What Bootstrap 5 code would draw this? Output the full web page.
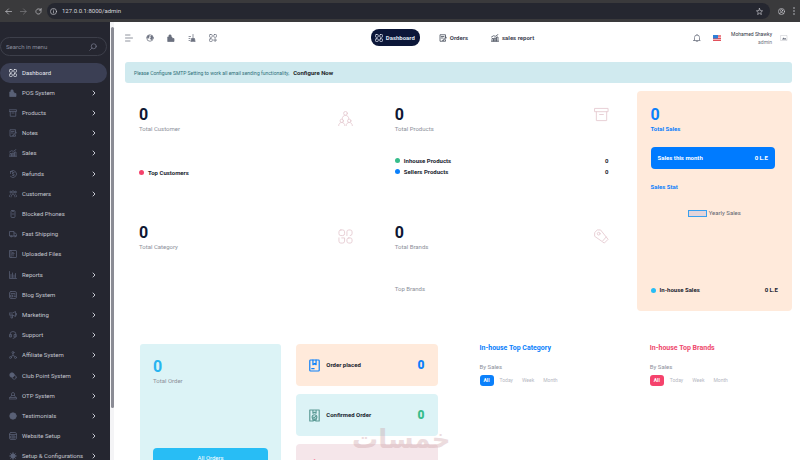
<!DOCTYPE html>
<html lang="en">
<head>
<meta charset="utf-8">
<meta name="viewport" content="width=device-width, initial-scale=1">
<title>Admin dashboard</title>
<link rel="stylesheet" href="https://cdn.jsdelivr.net/npm/bootstrap@5.3.0/dist/css/bootstrap.min.css">
<style>
body{font:6px/10px Roboto,"Liberation Sans",sans-serif;color:#20242f;background:#fff;height:100vh;overflow:hidden}
svg{fill:none;stroke:currentColor;stroke-width:1.5;stroke-linecap:round;stroke-linejoin:round;flex:none}
a{color:inherit;text-decoration:none}
button,input{font:inherit}
.ic8{width:8px;height:8px}
.ic14{width:15px;height:15px;stroke-width:1;color:#e6cdd3}
.browser-bar{height:22px;background:#3a3a3c;color:#c9cad0;gap:8px;padding:0 5px}
.browser-bar button,.plain-btn{border:0;padding:0;background:none;color:inherit;display:flex}
.browser-bar .ic8{width:7px;height:7px}
.address{background:#252730;border-radius:8px;height:16px;padding:0 7px 0 3px;margin-left:-3px;gap:5px}
.address input{background:none;border:0;outline:0;color:#d5d6dc;padding:0;min-width:0}
.side{width:110px;background:#252630;color:#c3c5ce;padding-top:15px}
.side-search{height:19px;border:1px solid #3d3f4a;border-radius:10px;padding:0 9px 0 5px;margin:0 3px 7px 0;color:#74778a}
.side-search input{background:none;border:0;outline:0;min-width:0;color:inherit;padding:0}
.side-search input::placeholder{color:#8b8e9d;opacity:1}
.side li:nth-child(5n){margin-bottom:1px}
.side li a{height:20px;padding:0 11px 0 9px;margin-right:3px;gap:5px;display:flex;align-items:center;border-radius:10px;white-space:nowrap}
.side li a .ic8{color:#596076}
.side li a.current,.side li a.current .ic8{color:#e6e8ef}
.side li a.current{background:#3b3f54}
.side li a .chev{width:4px;height:6px;margin-left:auto;stroke-width:1}
.scroll-track{width:4px;background:#f4f4f6}
.scroll-thumb{height:87%;margin:5px 0 0 1px;background:#8b8c95;border-radius:2px}
.page{padding:0 8px 0 11px}
.topbar{display:grid;grid-template-columns:1fr auto 1fr;height:31px;align-items:center;color:#6b707f}
.top-icons{gap:13px}
.top-links{gap:19px;font-weight:700;color:#3f4554;margin-right:12px}
.top-links a{display:flex;align-items:center;gap:3px}
.top-links .pill{background:#0c1739;color:#dfe3f0;border-radius:8px;height:17px;padding:0 5px 0 4px}
.user-name{font-size:5px;line-height:8px;color:#2f3442;white-space:nowrap}
.user-name small{font-size:5px;line-height:8px;color:#737783}
.flag{width:8px;height:6px;margin:0 10px 0 12px}
.avatar{width:8px;height:6px;margin:0 4px 0 8px}
.notice{background:#d0eaef;color:#2f7079;height:21px;border-radius:3px;padding:0 9px;margin:9px 0 8px;gap:4px;font-size:5px}
.notice a{font-size:6px}
.stats{display:grid;grid-template-columns:14fr 14fr 9fr;column-gap:14px;row-gap:16px}
.stat{height:102px;padding:16px 14px 0}
.tall{grid-column:3;grid-row:1/3;background:#ffeadb;border-radius:4px;padding:16px 14px}
.num{font-size:16px;line-height:16px;font-weight:700;color:#0e1733}
.muted,.total-label{line-height:12px}
.muted{color:#8c909a}
.dot{width:5px;height:5px;border-radius:50%}
.bg-rose{background:#f5426c}
.bg-mint{background:#36bd8b}
.bg-azure{background:#0b80fb}
.bg-sky{background:#28bdf5}
.rows{font-weight:700;line-height:11px;margin-top:20px}
.rows.one{margin-top:32px}
.stats .brand-title{margin-top:30px}
.blue,.num.blue{color:#0b80fb}
.month{background:#007bff;color:#fff;height:22px;border-radius:4px;padding:0 7px;margin:12px 3px 13px 0}
.legend-row{gap:2px;margin-top:16px;color:#62656f}
.swatch{width:19px;height:7px;border:1px solid #39a0ee;background:#e5d4d9}
.lower{display:grid;grid-template-columns:326fr 156fr 156fr;column-gap:14px;margin-top:18px}
.orders{display:grid;grid-template-columns:1fr 1fr;gap:15px;padding:15px 14px 0 15px}
.total-order{background:#dcf3f6;border-radius:3px;padding:15px 13px}
.all-btn{background:#28bdf5;color:#fff;border:0;border-radius:4px;height:20px;margin-top:61px;padding:0}
.order-state{height:42px;border-radius:4px;padding:0 13px;font-weight:700;gap:6px}
.order-state svg{width:11px;height:13px}
.order-state b{font-size:12px}
.top-list{padding:13px 14px}
.top-list h2{font-size:7px;line-height:12px;font-weight:700;margin:0 0 7px}
.periods{gap:1px;color:#b5b7bf;font-size:5px;margin-top:2px}
.periods button{border:0;background:none;color:inherit;height:11px;border-radius:3px;padding:0 4px;line-height:11px}
.periods button.on{color:#fff;font-weight:700;margin-right:1px}
.periods button.bg-azure{background:#0b80fb}
.periods button.bg-rose{background:#f5426c}
.watermark{position:absolute;left:352px;top:423px;font:700 26px/32px "DejaVu Sans",sans-serif;color:#c99ba0;opacity:.34;pointer-events:none}
</style>
</head>
<body class="d-flex flex-column position-relative">
<svg class="d-none">
<symbol id="grid" viewBox="0 0 16 16"><rect x="1" y="1" width="5.5" height="5.5" rx="1.5"/><rect x="9.5" y="1" width="5.5" height="5.5" rx="1.5"/><rect x="1" y="9.5" width="5.5" height="5.5" rx="1.5"/><rect x="9.5" y="9.5" width="5.5" height="5.5" rx="1.5"/></symbol>
<symbol id="gridplus" viewBox="0 0 16 16"><rect x="1" y="1" width="5.5" height="5.5" rx="1.5"/><rect x="9.5" y="1" width="5.5" height="5.5" rx="1.5"/><rect x="1" y="9.5" width="5.5" height="5.5" rx="1.5"/><path d="M12.2 9v6.500M9 12.200h6.500"/></symbol>
<symbol id="category" viewBox="0 0 16 16"><rect x="1" y="1" width="6" height="6" rx="2"/><path d="M9.500 7V3a2 2 0 0 1 2-2h1.500a2 2 0 0 1 2 2v2a2 2 0 0 1-2 2M1 9.500V13a2 2 0 0 0 2 2h2a2 2 0 0 0 2-2V9.500H4"/><rect x="9.500" y="9.500" width="5.500" height="5.500" rx="2"/></symbol>
<symbol id="pos" viewBox="0 0 16 16"><path fill="currentColor" d="M2 6h8v3h4v6H2zM4 6V2h4v4"/></symbol>
<symbol id="box" viewBox="0 0 16 16"><path d="M1 1.500h14V5H1zM2.500 5v9.500h11V5M6 8h4"/></symbol>
<symbol id="note" viewBox="0 0 16 16"><path d="M13 7V1.500H2v13h11V12M4.500 5H10M4.500 8H8M8 11.500l6-6 1.500 1.500-6 6H8z"/></symbol>
<symbol id="sales" viewBox="0 0 16 16"><path d="M1 14.500h14M2 14V9h3v5M6.500 14V8h3v6M11 14V6h3v8M1 6l4-2.500 4 1 5-3.500"/></symbol>
<symbol id="refund" viewBox="0 0 16 16"><path d="M3 3a7 7 0 1 1 0 10M3 3v4M3 3h4M10 5H7v3h3v3H7"/></symbol>
<symbol id="people" viewBox="0 0 16 16"><circle cx="8" cy="4" r="2.500"/><circle cx="3" cy="4" r="1.500"/><circle cx="13" cy="4" r="1.500"/><path d="M4 14c0-7 8-7 8 0M1 13c0-3 1-5 3-5M15 13c0-3-1-5-3-5"/></symbol>
<symbol id="phone" viewBox="0 0 16 16"><rect x="4" y="1" width="8" height="14" rx="2"/><path d="M6 8h4M7 3h2"/></symbol>
<symbol id="truck" viewBox="0 0 16 16"><path d="M3 12H1V3h9v9H6M10 6h3l2 3v3h-1"/><circle cx="4.500" cy="12.500" r="1.500"/><circle cx="12" cy="12.500" r="1.500"/></symbol>
<symbol id="upload" viewBox="0 0 16 16"><rect x="1" y="1" width="14" height="14" rx="1"/><path d="M8 12V5M5.500 7.500L8 5l2.500 2.500M4 1v14"/></symbol>
<symbol id="chart" viewBox="0 0 16 16"><path d="M1 1v14h14M4 13V7M7 13V4M10 13V8M13 13V5"/></symbol>
<symbol id="blog" viewBox="0 0 16 16"><rect x="1" y="1" width="14" height="14" rx="3"/><path d="M4 5h8M4 8h3v4H4zM10 8h3M10 11h3"/></symbol>
<symbol id="horn" viewBox="0 0 16 16"><path d="M1 4h6l6-3v10L7 8H1zM4 8v6h3V8M15 5v3"/></symbol>
<symbol id="support" viewBox="0 0 16 16"><path d="M2 11V7a6 6 0 0 1 12 0v4M2 7h3v5H2zM11 7h3v5h-3zM12 13l-4 2"/></symbol>
<symbol id="tree" viewBox="0 0 16 16"><circle cx="8" cy="3" r="2"/><circle cx="3" cy="13" r="2"/><circle cx="13" cy="13" r="2"/><path d="M8 5v4M4 11l4-2 4 2"/></symbol>
<symbol id="club" viewBox="0 0 16 16"><circle cx="6" cy="6" r="4.500" fill="currentColor"/><circle cx="10.500" cy="10.500" r="4"/></symbol>
<symbol id="otp" viewBox="0 0 16 16"><path d="M5 7V4a3 3 0 0 1 6 0v3M3 10l2-3h6l2 3M1 14h14v-3H1z"/></symbol>
<symbol id="ball" viewBox="0 0 16 16"><circle cx="8" cy="8" r="6.500" fill="currentColor"/></symbol>
<symbol id="web" viewBox="0 0 16 16"><rect x="1" y="1" width="14" height="14" rx="3"/><path d="M1 5h14M4 8h8v4H4zM8 8v4"/></symbol>
<symbol id="gear" viewBox="0 0 16 16"><circle cx="8" cy="8" r="4.500" fill="currentColor"/><path d="M8 1v14M1 8h14M3 3l10 10M13 3L3 13"/></symbol>
<symbol id="chev" viewBox="0 0 4 6"><path d="M1 1l2 2-2 2"/></symbol>
<symbol id="lens" viewBox="0 0 16 16"><circle cx="9.500" cy="6.500" r="5"/><path d="M6 10l-4.500 4.500"/></symbol>
<symbol id="globe" viewBox="0 0 16 16"><circle cx="8" cy="8" r="6.500"/><path fill="currentColor" stroke-width=".8" d="M2.500 5l4-3v4l-2 3-2-1zM9 5l3-2 2 4-3 5-3-3 2-2z"/></symbol>
<symbol id="clean" viewBox="0 0 16 16"><path fill="currentColor" d="M10 1v7M6 15l1-6h6l1 6z"/><path d="M2 5h3M2 9h2M2 13h2"/></symbol>
<symbol id="bell" viewBox="0 0 16 16"><path d="M3 12V7a5 5 0 0 1 10 0v5l1.500 1h-13zM6.500 14.500h3M8 1v1"/></symbol>
<symbol id="parcel" viewBox="0 0 14 16"><rect x="1" y="1" width="12" height="14" rx="1"/><path d="M5 1v6l2-1.500L9 7V1M3.500 12h3"/></symbol>
<symbol id="parcelok" viewBox="0 0 14 16"><path d="M4 15H1V1h12v14h-3M5 1v4l2-1 2 1V1"/><circle cx="7" cy="10" r="3"/><path d="M5.700 10l1 1 1.700-2M5 12.500V15l2-1 2 1v-2.500"/></symbol>
</svg>

<header class="browser-bar d-flex align-items-center flex-shrink-0">
  <button type="button" aria-label="Back"><svg class="ic8" viewBox="0 0 16 16" stroke-width="2"><path d="M15 8H2M8 2L2 8l6 6"/></svg></button>
  <button type="button" class="opacity-50" aria-label="Forward"><svg class="ic8" viewBox="0 0 16 16"><path d="M1 8h13M8 2l6 6-6 6"/></svg></button>
  <button type="button" aria-label="Reload"><svg class="ic8" viewBox="0 0 16 16"><path d="M14 8a6 6 0 1 1-2-4.500L14 5M14 1v4h-4"/></svg></button>
  <div class="address d-flex align-items-center flex-fill">
    <svg class="ic8" viewBox="0 0 16 16"><circle cx="8" cy="8" r="7"/><path d="M8 7v4.500M8 4.500v.2"/></svg>
    <input class="flex-fill" type="text" aria-label="Address" value="127.0.0.1:8000/admin">
    <button type="button" aria-label="Bookmark"><svg class="ic8" viewBox="0 0 16 16"><path d="M8 1l2 5 5 .5-4 3.500 1.300 5L8 12l-4.300 3L5 10 1 6.500 6 6z"/></svg></button>
  </div>
  <button type="button" aria-label="Profile"><svg class="ic8" viewBox="0 0 16 16"><circle cx="8" cy="8" r="7"/><circle cx="8" cy="6" r="2.500"/><path d="M3.500 13c1-4 8-4 9 0"/></svg></button>
  <button type="button" aria-label="Menu"><svg width="2" height="8" viewBox="0 0 2 8"><path d="M1 1v0M1 4v0M1 7v0"/></svg></button>
</header>

<div class="d-flex flex-fill overflow-hidden">
<nav class="side flex-shrink-0 overflow-hidden">
  <div class="side-search d-flex align-items-center">
    <input class="flex-fill" type="search" aria-label="Search in menu" placeholder="Search in menu">
    <svg class="ic8"><use href="#lens"/></svg>
  </div>
  <ul class="list-unstyled m-0">
    <li><a class="current" href="#"><svg class="ic8"><use href="#grid"/></svg>Dashboard</a></li>
    <li><a href="#"><svg class="ic8"><use href="#pos"/></svg>POS System<svg class="chev"><use href="#chev"/></svg></a></li>
    <li><a href="#"><svg class="ic8"><use href="#box"/></svg>Products<svg class="chev"><use href="#chev"/></svg></a></li>
    <li><a href="#"><svg class="ic8"><use href="#note"/></svg>Notes<svg class="chev"><use href="#chev"/></svg></a></li>
    <li><a href="#"><svg class="ic8"><use href="#sales"/></svg>Sales<svg class="chev"><use href="#chev"/></svg></a></li>
    <li><a href="#"><svg class="ic8"><use href="#refund"/></svg>Refunds<svg class="chev"><use href="#chev"/></svg></a></li>
    <li><a href="#"><svg class="ic8"><use href="#people"/></svg>Customers<svg class="chev"><use href="#chev"/></svg></a></li>
    <li><a href="#"><svg class="ic8"><use href="#phone"/></svg>Blocked Phones</a></li>
    <li><a href="#"><svg class="ic8"><use href="#truck"/></svg>Fast Shipping</a></li>
    <li><a href="#"><svg class="ic8"><use href="#upload"/></svg>Uploaded Files</a></li>
    <li><a href="#"><svg class="ic8"><use href="#chart"/></svg>Reports<svg class="chev"><use href="#chev"/></svg></a></li>
    <li><a href="#"><svg class="ic8"><use href="#blog"/></svg>Blog System<svg class="chev"><use href="#chev"/></svg></a></li>
    <li><a href="#"><svg class="ic8"><use href="#horn"/></svg>Marketing<svg class="chev"><use href="#chev"/></svg></a></li>
    <li><a href="#"><svg class="ic8"><use href="#support"/></svg>Support<svg class="chev"><use href="#chev"/></svg></a></li>
    <li><a href="#"><svg class="ic8"><use href="#tree"/></svg>Affiliate System<svg class="chev"><use href="#chev"/></svg></a></li>
    <li><a href="#"><svg class="ic8"><use href="#club"/></svg>Club Point System<svg class="chev"><use href="#chev"/></svg></a></li>
    <li><a href="#"><svg class="ic8"><use href="#otp"/></svg>OTP System<svg class="chev"><use href="#chev"/></svg></a></li>
    <li><a href="#"><svg class="ic8"><use href="#ball"/></svg>Testimonials<svg class="chev"><use href="#chev"/></svg></a></li>
    <li><a href="#"><svg class="ic8"><use href="#web"/></svg>Website Setup<svg class="chev"><use href="#chev"/></svg></a></li>
    <li><a href="#"><svg class="ic8"><use href="#gear"/></svg>Setup &amp; Configurations<svg class="chev"><use href="#chev"/></svg></a></li>
  </ul>
</nav>
<div class="scroll-track flex-shrink-0"><div class="scroll-thumb"></div></div>

<main class="page flex-fill overflow-hidden">
  <div class="topbar">
    <div class="top-icons d-flex align-items-center">
      <button class="plain-btn" type="button" aria-label="Toggle menu"><svg class="ic8" viewBox="0 0 16 16"><path d="M1 2h9M1 8h14M1 14h9"/></svg></button>
      <a class="d-flex" href="#" aria-label="Browse website"><svg class="ic8"><use href="#globe"/></svg></a>
      <a class="d-flex" href="#" aria-label="POS"><svg class="ic8"><use href="#pos"/></svg></a>
      <a class="d-flex" href="#" aria-label="Clear cache"><svg class="ic8"><use href="#clean"/></svg></a>
      <a class="d-flex" href="#" aria-label="Add new"><svg class="ic8"><use href="#gridplus"/></svg></a>
    </div>
    <nav class="top-links d-flex align-items-center">
      <a class="pill" href="#"><svg class="ic8"><use href="#grid"/></svg>Dashboard</a>
      <a href="#"><svg class="ic8"><use href="#note"/></svg>Orders</a>
      <a class="ms-1" href="#"><svg class="ic8"><use href="#sales"/></svg>sales report</a>
    </nav>
    <div class="d-flex align-items-center justify-content-end">
      <button class="plain-btn" type="button" aria-label="Notifications"><svg class="ic8"><use href="#bell"/></svg></button>
      <svg class="flag" viewBox="0 0 8 6" role="img" aria-label="English"><path fill="#f5b3b7" stroke="none" d="M0 0h8v6H0z"/><path stroke="#e2515c" stroke-width="1" stroke-linecap="butt" d="M0 1h8M0 3.500h8M0 5.500h8"/><path fill="#2f7fd6" stroke="none" d="M0 0h5v3.500H0z"/></svg>
      <div class="text-end user-name">Mohamed Shawky<br><small>admin</small></div>
      <svg class="avatar" viewBox="0 0 8 6"><path stroke-width=".5" d="M1 .5h6v5H1z" opacity=".4"/><path fill="currentColor" stroke="none" d="M2 4.500l1.500-2 1 1 1-.5 1 1.500z"/></svg>
    </div>
  </div>

  <div class="notice d-flex align-items-center" role="alert">Please Configure SMTP Setting to work all email sending functionality, <a class="fw-bold text-dark" href="#">Configure Now</a></div>

  <section class="stats">
    <div class="stat">
      <div class="d-flex justify-content-between align-items-start"><div><div class="num">0</div><div class="muted">Total Customer</div></div>
        <svg class="ic14 mt-1" viewBox="0 0 16 16"><circle cx="8" cy="2.500" r="2"/><path d="M4.500 8c0-4.500 7-4.500 7 0"/><circle cx="4" cy="10.500" r="1.800"/><path d="M.7 15.500c0-4.500 6.600-4.500 6.600 0"/><circle cx="12" cy="10.500" r="1.800"/><path d="M8.700 15.500c0-4.500 6.600-4.500 6.600 0"/></svg></div>
      <div class="rows one d-flex align-items-center"><span class="dot bg-rose me-1"></span>Top Customers</div>
    </div>
    <div class="stat">
      <div class="d-flex justify-content-between align-items-start"><div><div class="num">0</div><div class="muted">Total Products</div></div>
        <svg class="ic14"><use href="#box"/></svg></div>
      <div class="rows">
        <div class="d-flex align-items-center"><span class="dot bg-mint me-1"></span>Inhouse Products<span class="ms-auto">0</span></div>
        <div class="d-flex align-items-center"><span class="dot bg-azure me-1"></span>Sellers Products<span class="ms-auto">0</span></div>
      </div>
    </div>
    <div class="tall d-flex flex-column">
      <div class="num blue">0</div><div class="blue fw-bold total-label">Total Sales</div>
      <div class="month d-flex align-items-center justify-content-between fw-bold"><span>Sales this month</span><span>0 L.E</span></div>
      <div class="blue fw-bold">Sales Stat</div>
      <div class="legend-row d-flex align-items-center justify-content-center"><span class="swatch"></span>Yearly Sales</div>
      <div class="mt-auto d-flex align-items-center fw-bold"><span class="dot bg-sky me-1"></span>In-house Sales<span class="ms-auto">0 L.E</span></div>
    </div>
    <div class="stat">
      <div class="d-flex justify-content-between align-items-start"><div><div class="num">0</div><div class="muted">Total Category</div></div>
        <svg class="ic14 mt-1"><use href="#category"/></svg></div>
    </div>
    <div class="stat">
      <div class="d-flex justify-content-between align-items-start"><div><div class="num">0</div><div class="muted">Total Brands</div></div>
        <svg class="ic14 mt-1" viewBox="0 0 16 16"><path d="M1 3.500L3.500 1H7l8 10-4 4L1 8zM9.500 12.500l3.500-4"/><circle cx="5" cy="5" r="1.500"/></svg></div>
      <div class="muted brand-title">Top Brands</div>
    </div>
  </section>

  <section class="lower">
    <div class="orders">
      <div class="total-order d-flex flex-column">
        <div class="num" style="color:#28b4f0">0</div><div class="muted">Total Order</div>
        <button class="all-btn" type="button">All Orders</button>
      </div>
      <div class="d-flex flex-column gap-2">
        <div class="order-state d-flex align-items-center" style="background:#ffeadb"><svg class="blue"><use href="#parcel"/></svg>Order placed<b class="ms-auto blue">0</b></div>
        <div class="order-state d-flex align-items-center" style="background:#dcf3f6"><svg style="color:#5c9b96"><use href="#parcelok"/></svg>Confirmed Order<b class="ms-auto" style="color:#36bd8b">0</b></div>
        <div class="order-state d-flex align-items-center" style="background:#f5e6ea;color:#f5426c"><svg viewBox="0 0 14 16"><path d="M7 1l6 3.500v7L7 15l-6-3.500v-7zM1 4.500L7 8l6-3.500M7 8v7"/></svg><b class="ms-auto">0</b></div>
      </div>
    </div>
    <div class="top-list">
      <h2 class="blue">In-house Top Category</h2>
      <div class="muted">By Sales</div>
      <div class="periods d-flex"><button class="on bg-azure" type="button">All</button><button type="button">Today</button><button type="button">Week</button><button type="button">Month</button></div>
    </div>
    <div class="top-list">
      <h2 style="color:#ee4a6e">In-house Top Brands</h2>
      <div class="muted">By Sales</div>
      <div class="periods d-flex"><button class="on bg-rose" type="button">All</button><button type="button">Today</button><button type="button">Week</button><button type="button">Month</button></div>
    </div>
  </section>
</main>
</div>
<div class="watermark" lang="ar" dir="rtl">خمسات</div>
<script src="https://cdn.jsdelivr.net/npm/bootstrap@5.3.0/dist/js/bootstrap.bundle.min.js"></script>
</body>
</html>
